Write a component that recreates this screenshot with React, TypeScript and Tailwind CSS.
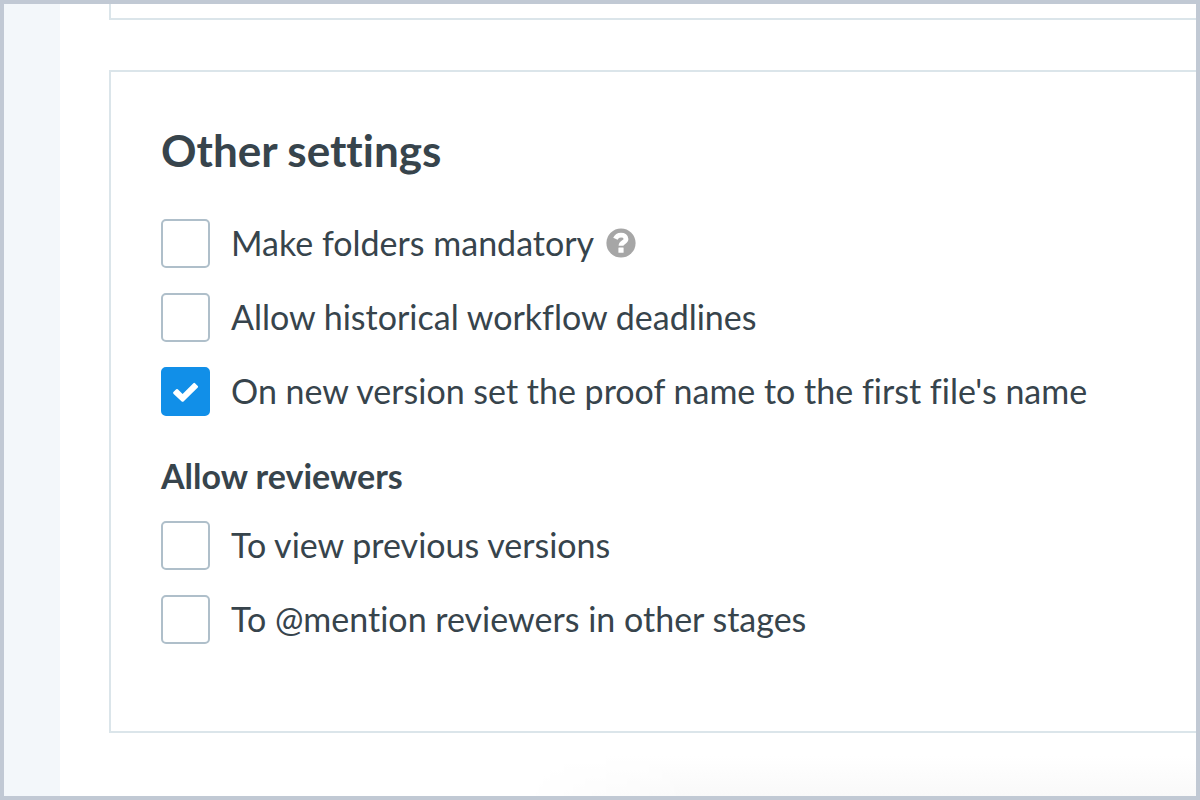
import { useState } from "react";
import type { ReactNode } from "react";

type OptionProps = {
  id: string;
  label: string;
  defaultChecked?: boolean;
  children?: ReactNode;
};

function Option({ id, label, defaultChecked = false, children }: OptionProps) {
  const [checked, setChecked] = useState(defaultChecked);
  return (
    <div className="flex items-center">
      <span className="relative mr-[21px] size-[49px] shrink-0">
        <input
          id={id}
          type="checkbox"
          checked={checked}
          onChange={(event) => setChecked(event.target.checked)}
          className="block size-full cursor-pointer appearance-none rounded-[5px] border-2 border-[#afbfca] bg-white checked:border-[#118fe8] checked:bg-[#118fe8]"
        />
        {checked && (
          <svg viewBox="0 0 49 49" className="pointer-events-none absolute inset-0 size-full" aria-hidden="true">
            <path
              d="M12.4 25.1L15.2 22.3Q16 21.6 16.8 22.3L21.6 27L32.4 16.2Q33.2 15.5 34 16.2L36.8 19Q37.5 19.8 36.8 20.6L22.5 34.4Q21.6 35.2 20.7 34.4L12.4 26.7Q11.7 25.9 12.4 25.1Z"
              fill="#fff"
            />
          </svg>
        )}
      </span>
      <label htmlFor={id} className="cursor-pointer pb-px">
        {label}
      </label>
      {children}
    </div>
  );
}

function HelpButton() {
  return (
    <button type="button" aria-label="Help" className="ml-3 cursor-pointer pb-px">
      <svg viewBox="0 0 30 30" className="block size-[30px]" aria-hidden="true">
        <circle cx="15" cy="15" r="14.6" fill="#a6a6a6" />
        <path d="M9.4 10.8C10.6 8 12.5 7.1 15 7.1C18 7.1 20 8.5 20 10.9C20 14.3 15 14.2 15 17.8" fill="none" stroke="#fff" strokeWidth="4.8" />
        <rect x="12.4" y="19.6" width="5.2" height="5.2" rx="0.5" fill="#fff" />
      </svg>
    </button>
  );
}

export default function App() {
  return (
    <div className="flex min-h-screen overflow-hidden border-4 border-[#c1c9d4] bg-white font-['Lato',sans-serif] text-[34px] leading-10 text-[#37444c] [font-variant-ligatures:none]">
      <aside className="w-14 shrink-0 bg-[#f3f7fa]" />
      <main className="flex min-w-0 flex-1 flex-col pl-[49px]">
        <div className="h-4 border-b-2 border-l-2 border-[#dbe5ea]" />
        <section className="mt-[50px] border-y-2 border-l-2 border-[#dbe5ea] pt-[53px] pb-[87px] pl-[50px]">
          <h2 className="text-[44px] leading-[50px] font-bold">Other settings</h2>
          <div className="mt-11 flex flex-col gap-[25px]">
            <Option id="folders" label="Make folders mandatory">
              <HelpButton />
            </Option>
            <Option id="deadlines" label="Allow historical workflow deadlines" />
            <Option id="proof-name" label="On new version set the proof name to the first file's name" defaultChecked />
          </div>
          <h3 className="mt-10 font-bold">Allow reviewers</h3>
          <div className="mt-[25px] flex flex-col gap-[25px]">
            <Option id="previous" label="To view previous versions" />
            <Option id="mention" label="To @mention reviewers in other stages" />
          </div>
        </section>
        <div className="mt-auto ml-[38%] h-10 bg-linear-to-b from-white to-[#f9f9f9] [mask-image:linear-gradient(to_right,transparent,black_25%)]" />
      </main>
    </div>
  );
}
